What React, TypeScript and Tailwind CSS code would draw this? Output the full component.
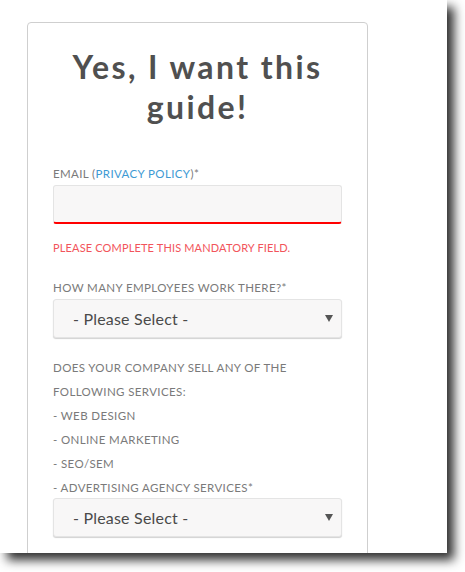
const LABEL = "text-[11.5px] uppercase text-[#7a7a7a] tracking-[0.38px]";

function SelectBox() {
  return (
    <div className="flex h-[39px] items-center justify-between rounded-[3px] border border-[#e4e4e4] bg-[#f8f7f7] pl-[19px] pr-[8px] shadow-[0_1px_1px_rgba(0,0,0,0.18)]">
      <span className="text-[16px] tracking-[0.2px] text-[#4a4a4a]">- Please Select -</span>
      <svg width="8" height="7" viewBox="0 0 8 7" className="text-[#555]">
        <polygon points="0,0 8,0 4,7" fill="currentColor" />
      </svg>
    </div>
  );
}

export default function App() {
  return (
    <div className="h-[572px] w-[465px] bg-white font-['Lato','Liberation_Sans',sans-serif]">
      <div className="h-[553px] w-[447px] overflow-hidden bg-white shadow-[7px_7px_10px_rgba(0,0,0,0.82)]">
        <div className="ml-[27px] mt-[22px] w-[341px] rounded-[4px] border border-[#cfcfcf] px-[25px] pb-[40px] pt-[24px]">
          <h1 className="text-center text-[32px] font-bold leading-[40px] tracking-[2.4px] text-[#505050]">
            Yes, I want this guide!
          </h1>

          <div className={`mt-[37px] leading-[20px] ${LABEL}`}>
            Email (<span className="text-[#3d9ad4]">Privacy Policy</span>)*
          </div>
          <div className="mt-[1px] h-[39px] rounded-[3px] border border-b-2 border-[#e4e4e4] border-b-[#ff0000] bg-[#f8f7f7]" />

          <div className="mt-[14px] text-[11px] uppercase leading-[20px] tracking-[0.15px] text-[#f2545b]">
            Please complete this mandatory field.
          </div>

          <div className={`mt-[20px] leading-[20px] ${LABEL}`}>How many employees work there?*</div>
          <div className="mt-[1px]">
            <SelectBox />
          </div>

          <div className={`mt-[18px] leading-[24px] ${LABEL}`}>
            <div>Does your company sell any of the</div>
            <div>following services:</div>
            <div>- Web design</div>
            <div>- Online marketing</div>
            <div>- SEO/SEM</div>
            <div>- Advertising agency services*</div>
          </div>
          <div className="-mt-[2px]">
            <SelectBox />
          </div>
        </div>
      </div>
    </div>
  );
}
